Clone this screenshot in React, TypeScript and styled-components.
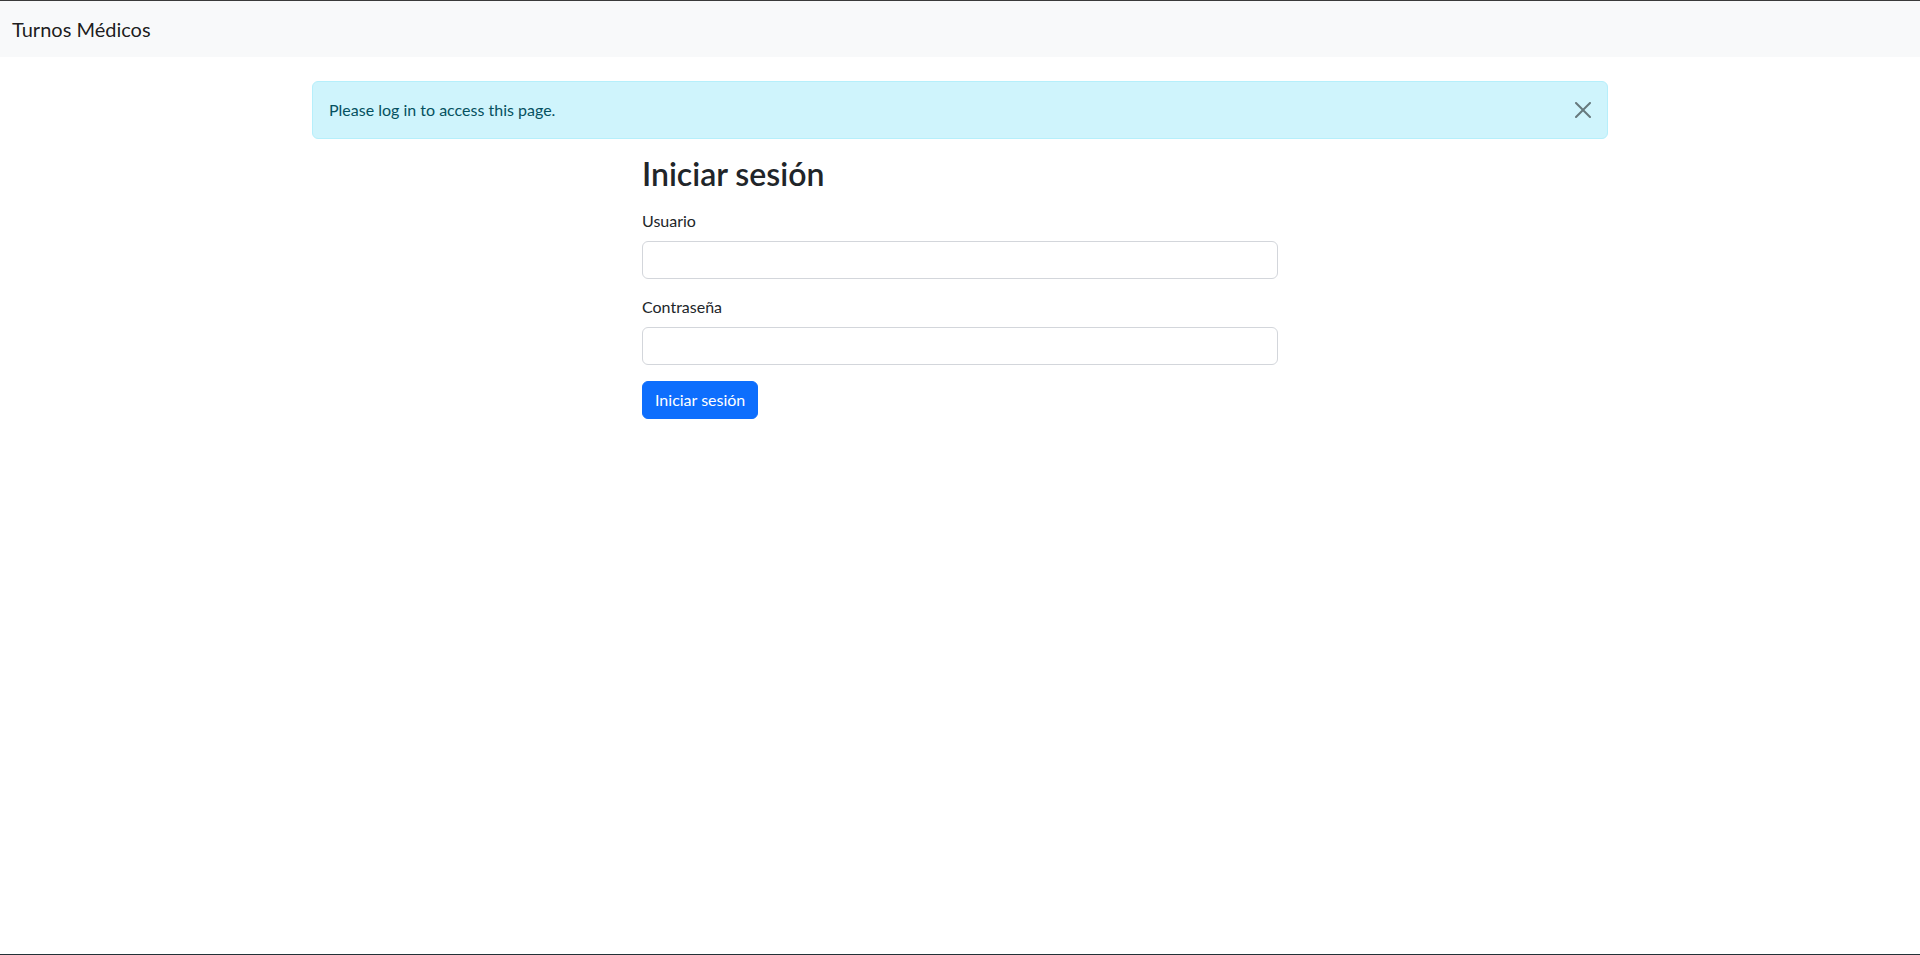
import React, { useState } from "react";
import styled, { createGlobalStyle } from "styled-components";

const GlobalStyle = createGlobalStyle`
  *, *::before, *::after { box-sizing: border-box; }
  html, body { margin: 0; padding: 0; }
  body {
    font-family: "Lato", "Liberation Sans", sans-serif;
    font-size: 16px;
    line-height: 1.5;
    color: #212529;
    background: #ffffff;
  }
`;

const Page = styled.div`
  min-height: 955px;
  border-top: 1px solid #3a3a3a;
  border-bottom: 1px solid #233137;
  display: flex;
  flex-direction: column;
`;

const Navbar = styled.nav`
  background: #f8f9fa;
  padding: 8px 12px;
  display: flex;
  align-items: center;
`;

const Brand = styled.a`
  font-size: 20px;
  line-height: 30px;
  padding: 5px 0;
  color: rgba(0, 0, 0, 0.9);
  text-decoration: none;
`;

const Container = styled.main`
  width: 1320px;
  margin: 24px auto 0;
  padding: 0 12px;
`;

const Alert = styled.div`
  position: relative;
  padding: 16px 64px 16px 16px;
  margin-bottom: 16px;
  background: #cff4fc;
  border: 1px solid #b6effb;
  border-radius: 6px;
  color: #055160;
`;

const CloseButton = styled.button`
  position: absolute;
  top: 0;
  right: 0;
  padding: 20px 16px;
  width: 48px;
  height: 56px;
  background: transparent;
  border: 0;
  cursor: pointer;
  display: flex;
  align-items: center;
  justify-content: center;
  opacity: 0.5;
  color: #000;
`;

const FormColumn = styled.section`
  width: 636px;
  margin-left: 330px;
`;

const Title = styled.h2`
  font-size: 32px;
  font-weight: 600;
  line-height: 1.2;
  margin: 0 0 16px;
  color: #212529;
`;

const Field = styled.div`
  margin-bottom: 16px;
`;

const Label = styled.label`
  display: block;
  margin-bottom: 8px;
`;

const Input = styled.input`
  display: block;
  width: 100%;
  height: 38px;
  padding: 6px 12px;
  font: inherit;
  color: #212529;
  background: #fff;
  border: 1px solid #d3d6db;
  border-radius: 6px;
  outline: none;
`;

const SubmitButton = styled.button`
  font: inherit;
  line-height: 24px;
  padding: 6px 12px;
  color: #fff;
  background: #0d6efd;
  border: 1px solid #0d6efd;
  border-radius: 6px;
  cursor: pointer;
`;

const CloseIcon = () => (
  <svg width="16" height="16" viewBox="0 0 16 16" fill="currentColor" aria-hidden="true">
    <path d="M.293.293a1 1 0 0 1 1.414 0L8 6.586 14.293.293a1 1 0 1 1 1.414 1.414L9.414 8l6.293 6.293a1 1 0 0 1-1.414 1.414L8 9.414l-6.293 6.293a1 1 0 0 1-1.414-1.414L6.586 8 .293 1.707a1 1 0 0 1 0-1.414z" />
  </svg>
);

export default function App() {
  const [showAlert, setShowAlert] = useState(true);
  return (
    <Page>
      <GlobalStyle />
      <Navbar>
        <Brand href="#">Turnos Médicos</Brand>
      </Navbar>
      <Container>
        {showAlert && (
          <Alert role="alert">
            Please log in to access this page.
            <CloseButton aria-label="Close" onClick={() => setShowAlert(false)}>
              <CloseIcon />
            </CloseButton>
          </Alert>
        )}
        <FormColumn>
          <Title>Iniciar sesión</Title>
          <form onSubmit={(e) => e.preventDefault()}>
            <Field>
              <Label htmlFor="username">Usuario</Label>
              <Input id="username" type="text" />
            </Field>
            <Field>
              <Label htmlFor="password">Contraseña</Label>
              <Input id="password" type="password" />
            </Field>
            <SubmitButton type="submit">Iniciar sesión</SubmitButton>
          </form>
        </FormColumn>
      </Container>
    </Page>
  );
}
